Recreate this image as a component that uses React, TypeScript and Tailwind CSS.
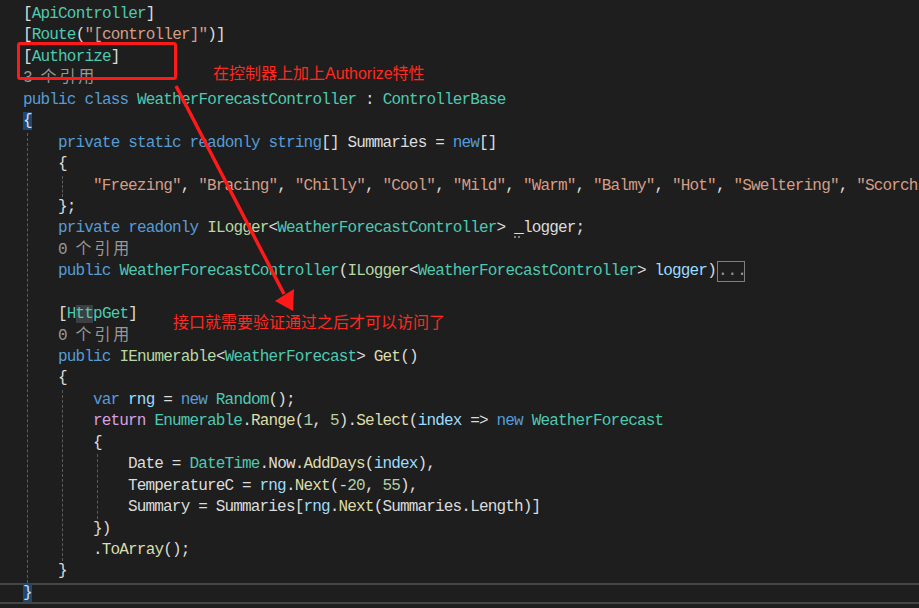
import type { ReactNode } from "react";

const W = "text-[#dcdcdc]";
const KW = "text-[#569cd6]";
const TY = "text-[#4ec9b0]";
const IF = "text-[#b8d7a3]";
const ST = "text-[#d69d85]";
const FN = "text-[#dcdcaa]";
const VA = "text-[#9cdcfe]";
const NU = "text-[#b5cea8]";
const CT = "text-[#d8a0df]";
const GR = "text-[#999999]";

type Tok = [string, string];

function Token({ t }: { t: Tok }) {
  const [text, cls] = t;
  if (cls === "brace") return <span className="bg-[#1c4a78] text-[#dcdcdc]">{text}</span>;
  if (cls === "hl") return <span className="bg-[#3c3f41] text-[#4ec9b0]">{text}</span>;
  if (cls === "refs")
    return (
      <span className={GR}>
        {text} <span className="tracking-[2.9px]">个引用</span>
      </span>
    );
  if (cls === "logger")
    return (
      <span className="text-[#dcdcdc]">
        <span className="underline decoration-dotted decoration-[#9a9a9a] underline-offset-4">_</span>
        logger
      </span>
    );
  if (cls === "dots")
    return (
      <span className="ml-[1px] inline-block h-[21px] w-[28px] border border-[#7f7f7f] text-center align-top leading-[19px] tracking-normal text-[#9a9a9a]">
        {text}
      </span>
    );
  return <span className={cls}>{text}</span>;
}

function Line({ toks, current }: { toks: Tok[]; current?: boolean }) {
  return (
    <div
      className={
        current
          ? "-ml-[23px] h-[21.45px] whitespace-pre border-y-2 border-[#464646] pl-[23px] leading-[17.45px]"
          : "h-[21.45px] whitespace-pre"
      }
    >
      {toks.map((t, j) => (
        <Token key={j} t={t} />
      ))}
    </div>
  );
}

// one indent level, with its dashed guide line at the left
function Block({ children }: { children: ReactNode }) {
  return <div className="ml-[4px] border-l border-dashed border-[#5c5c5c] pl-[30px]">{children}</div>;
}

function Annotation({ className, children }: { className: string; children: ReactNode }) {
  return (
    <div
      className={
        "absolute font-['Liberation_Sans','Noto_Sans_CJK_SC',sans-serif] text-[16px] leading-[24px] text-[#ff2a1f] " +
        className
      }
    >
      {children}
    </div>
  );
}

export default function App() {
  return (
    <div className="relative h-[608px] w-[919px] overflow-hidden bg-[#1e1e1e]">
      <div className="pl-[23px] pt-[4px] font-['Liberation_Mono','Noto_Sans_CJK_SC',monospace] text-[16px] leading-[21.45px] tracking-[-0.83px]">
        <Line toks={[["[", W], ["ApiController", TY], ["]", W]]} />
        <Line toks={[["[", W], ["Route", TY], ["(", W], ['"[controller]"', ST], [")]", W]]} />
        <Line toks={[["[", W], ["Authorize", TY], ["]", W]]} />
        <Line toks={[["3", "refs"]]} />
        <Line toks={[["public class ", KW], ["WeatherForecastController", TY], [" : ", W], ["ControllerBase", TY]]} />
        <Line toks={[["{", "brace"]]} />
        <Block>
          <Line toks={[["private static readonly string", KW], ["[] Summaries = ", W], ["new", KW], ["[]", W]]} />
          <Line toks={[["{", W]]} />
          <Block>
            <Line
              toks={[
                ['"Freezing"', ST], [", ", W], ['"Bracing"', ST], [", ", W], ['"Chilly"', ST], [", ", W],
                ['"Cool"', ST], [", ", W], ['"Mild"', ST], [", ", W], ['"Warm"', ST], [", ", W], ['"Balmy"', ST],
                [", ", W], ['"Hot"', ST], [", ", W], ['"Sweltering"', ST], [", ", W], ['"Scorching"', ST],
              ]}
            />
          </Block>
          <Line toks={[["};", W]]} />
          <Line
            toks={[
              ["private readonly ", KW], ["ILogger", IF], ["<", W], ["WeatherForecastController", TY], ["> ", W],
              ["_logger", "logger"], [";", W],
            ]}
          />
          <Line toks={[["0", "refs"]]} />
          <Line
            toks={[
              ["public ", KW], ["WeatherForecastController", TY], ["(", W], ["ILogger", IF], ["<", W],
              ["WeatherForecastController", TY], ["> ", W], ["logger", VA], [")", W], ["...", "dots"],
            ]}
          />
          <Line toks={[]} />
          <Line toks={[["[", W], ["H", TY], ["tt", "hl"], ["pGet", TY], ["]", W]]} />
          <Line toks={[["0", "refs"]]} />
          <Line
            toks={[["public ", KW], ["IEnumerable", IF], ["<", W], ["WeatherForecast", TY], ["> ", W], ["Get", FN], ["()", W]]}
          />
          <Line toks={[["{", W]]} />
          <Block>
            <Line toks={[["var ", KW], ["rng", VA], [" = ", W], ["new ", KW], ["Random", TY], ["();", W]]} />
            <Line
              toks={[
                ["return ", CT], ["Enumerable", TY], [".", W], ["Range", FN], ["(", W], ["1", NU], [", ", W], ["5", NU],
                [").", W], ["Select", FN], ["(", W], ["index", VA], [" => ", W], ["new ", KW], ["WeatherForecast", TY],
              ]}
            />
            <Line toks={[["{", W]]} />
            <Block>
              <Line
                toks={[["Date = ", W], ["DateTime", TY], [".Now.", W], ["AddDays", FN], ["(", W], ["index", VA], ["),", W]]}
              />
              <Line
                toks={[
                  ["TemperatureC = ", W], ["rng", VA], [".", W], ["Next", FN], ["(-", W], ["20", NU], [", ", W],
                  ["55", NU], ["),", W],
                ]}
              />
              <Line
                toks={[["Summary = Summaries[", W], ["rng", VA], [".", W], ["Next", FN], ["(Summaries.Length)]", W]]}
              />
            </Block>
            <Line toks={[["})", W]]} />
            <Line toks={[[".", W], ["ToArray", FN], ["();", W]]} />
          </Block>
          <Line toks={[["}", W]]} />
        </Block>
        <Line toks={[["}", "brace"]]} current />
      </div>

      {/* red markup drawn over the screenshot */}
      <div className="absolute left-[17px] top-[42px] h-[38px] w-[160px] rounded-[3px] border-[3px] border-[#ff1a1a]" />
      <Annotation className="left-[213px] top-[62px]">在控制器上加上Authorize特性</Annotation>
      <Annotation className="left-[173px] top-[311px]">接口就需要验证通过之后才可以访问了</Annotation>
      <svg className="pointer-events-none absolute left-0 top-0" width="919" height="608">
        <line x1="176" y1="86" x2="284" y2="294" stroke="#ff1a1a" strokeWidth="3.5" />
        <polygon points="293,311 275,301 294,289" fill="#ff1a1a" />
      </svg>
    </div>
  );
}
